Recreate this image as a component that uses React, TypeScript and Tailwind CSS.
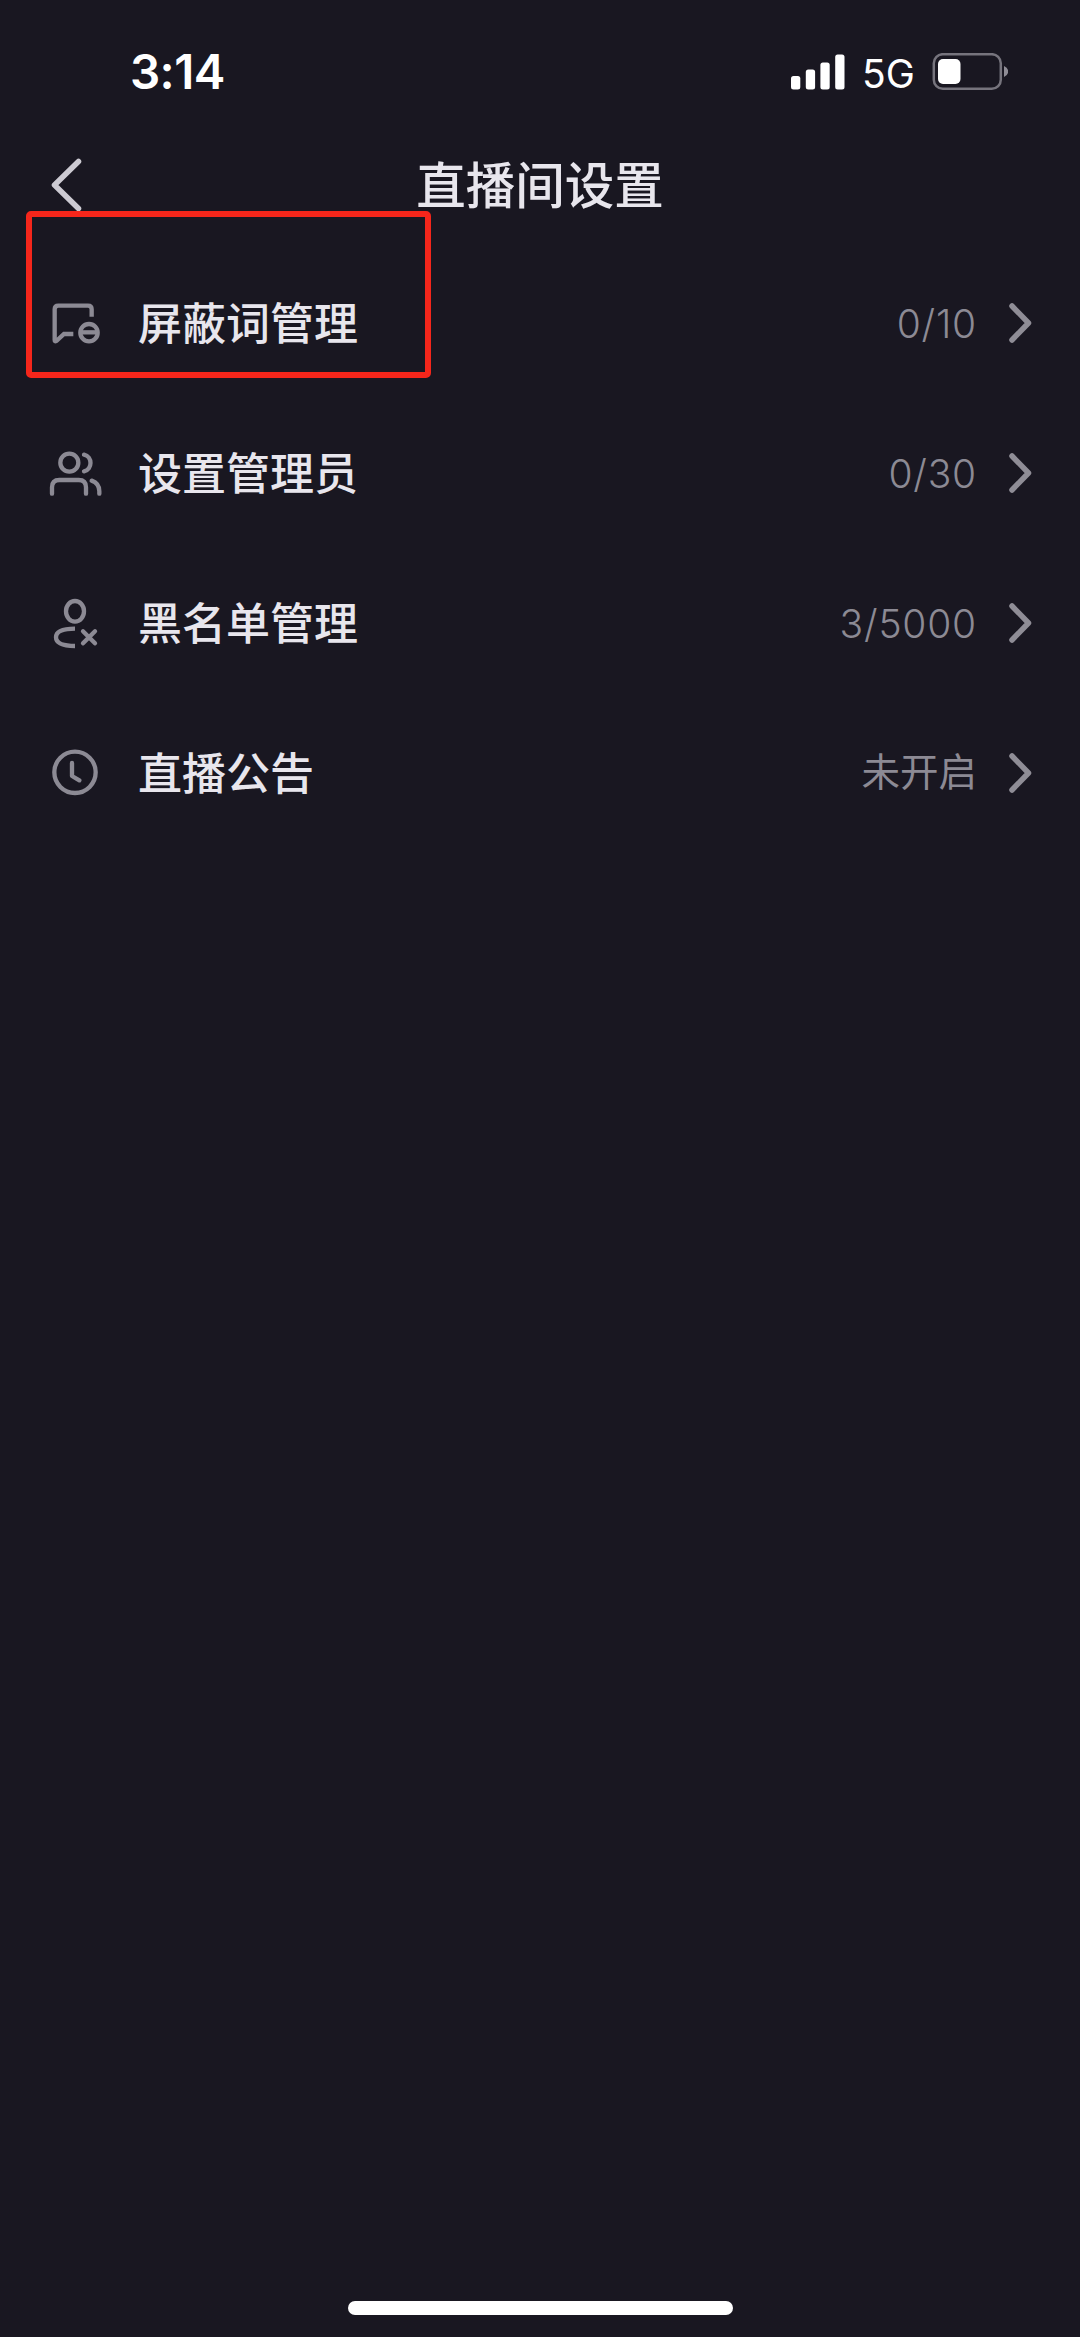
import type { ReactNode } from 'react'
import clsx from 'clsx'

interface SettingItem {
    id: string
    label: string
    value: string
    icon: ReactNode
}

const settings: SettingItem[] = [
    {
        id: 'words',
        label: '屏蔽词管理',
        value: '0/10',
        icon: (
            <>
                <path d="M155 110V88q0-11-11-11H55q-11 0-11 11v92q0 6 5 3l23-21h28" />
                <circle cx="147" cy="158" r="26" />
                <path d="M125 157h44" />
            </>
        ),
    },
    {
        id: 'admins',
        label: '设置管理员',
        value: '0/30',
        icon: (
            <>
                <circle cx="88" cy="98" r="27" />
                <path strokeLinecap="round" d="M132 74C158 80 158 118 132 124" />
                <path strokeLinecap="round" d="M36 191v-19q0-22 22-22h58q22 0 22 22v19" />
                <path strokeLinecap="round" d="M155 152q23 8 23 32v7" />
            </>
        ),
    },
    {
        id: 'blacklist',
        label: '黑名单管理',
        value: '3/5000',
        icon: (
            <>
                <ellipse cx="105" cy="94" rx="27" ry="31" />
                <path d="M105 146C70 146 48 152 48 172S70 198 105 198" />
                <path strokeLinecap="round" d="M129 154l36 36M165 154l-36 36" />
            </>
        ),
    },
    {
        id: 'notice',
        label: '直播公告',
        value: '未开启',
        icon: (
            <>
                <circle cx="105" cy="127" r="62" />
                <path strokeLinecap="round" strokeLinejoin="round" d="M96 99v39l22 13" />
            </>
        ),
    },
]

function StatusBar() {
    return (
        <div className="flex h-36 items-center pl-[130px] pr-[72px] text-white">
            <span className="font-['Inter',sans-serif] text-[47.500px] font-semibold leading-none tracking-[-0.6px]">3:14</span>
            <svg className="ml-auto h-[36px] w-[54px]" viewBox="0 0 54 36" fill="currentColor">
                <rect x="0" y="22" width="9.3" height="13.5" rx="2.5" />
                <rect x="14.8" y="15.5" width="9.3" height="20" rx="2.5" />
                <rect x="29.4" y="8.5" width="9.3" height="27" rx="2.5" />
                <rect x="44.2" y="0.5" width="9.3" height="35" rx="2.5" />
            </svg>
            <span className="ml-[17px] mt-[2px] w-[70px] font-['Inter',sans-serif] text-[39px] leading-none">5G</span>
            <svg className="h-[38px] w-[76px]" viewBox="0 0 76 38" fill="none">
                <rect x="1.8" y="1.2" width="67" height="34.6" rx="9" stroke="#76747d" strokeWidth="2.5" />
                <rect x="6" y="6" width="22.5" height="25" rx="5" fill="#fff" />
                <path d="M72 13q4.200 2 4.200 5.500t-4.200 5.500z" fill="#8f8d96" />
            </svg>
        </div>
    )
}

function SettingRow({ item }: { item: SettingItem }) {
    const isCount = item.value.includes('/')

    return (
        <div className="flex h-[150px] items-center pl-10 pr-[48px]">
            <svg
                className="h-20 w-20 shrink-0 text-[#8c8a94]"
                viewBox="0 9 240 240"
                fill="none"
                stroke="currentColor"
                strokeWidth="13"
            >
                {item.icon}
            </svg>
            <span className="mb-1 ml-[18px] text-[44px] font-medium leading-none text-[#e8e6ed]">{item.label}</span>
            <span
                className={clsx(
                    "ml-auto font-['Inter','Noto_Sans_CJK_SC',sans-serif] leading-none text-[#8c8a94]",
                    isCount ? 'mt-px text-[39px] font-[350] tracking-[0.8px]' : 'mb-px text-[38.500px]'
                )}
            >
                {item.value}
            </span>
            <svg
                className="ml-[31px] h-10 w-6 text-[#8f8d96]"
                viewBox="0 0 24 40"
                fill="none"
                stroke="currentColor"
                strokeWidth="5.500"
                strokeLinecap="round"
                strokeLinejoin="round"
            >
                <path d="M4 3l16.500 17L4 37" />
            </svg>
        </div>
    )
}

export default function App() {
    return (
        <div className="relative flex h-[2337px] w-[1080px] flex-col bg-[#191721] font-['Noto_Sans_CJK_SC',sans-serif]">
            <StatusBar />

            <header className="grid h-[104px] grid-cols-[200px_1fr_200px] items-start">
                <svg
                    className="ml-[50px] mt-[14px] h-[54px] w-[34px]"
                    viewBox="0 0 34 54"
                    fill="none"
                    stroke="#cccad2"
                    strokeWidth="5.500"
                    strokeLinecap="round"
                    strokeLinejoin="round"
                >
                    <path d="M28.500 3.500L4.500 27l24 23.500" />
                </svg>
                <h1 className="mt-[14px] text-center text-[49.500px] font-medium leading-[50px] text-[#e8e6ed]">直播间设置</h1>
            </header>

            <main className="flex flex-col">
                {settings.map((item) => (
                    <SettingRow key={item.id} item={item} />
                ))}
            </main>

            {/* Highlight around the first entry */}
            <div className="absolute left-[26px] top-[211px] h-[167px] w-[405px] rounded-[5px] border-[6px] border-[#f5261b]" />

            <div className="mx-auto mb-[22px] mt-auto h-[14px] w-[385px] rounded-full bg-white" />
        </div>
    )
}
